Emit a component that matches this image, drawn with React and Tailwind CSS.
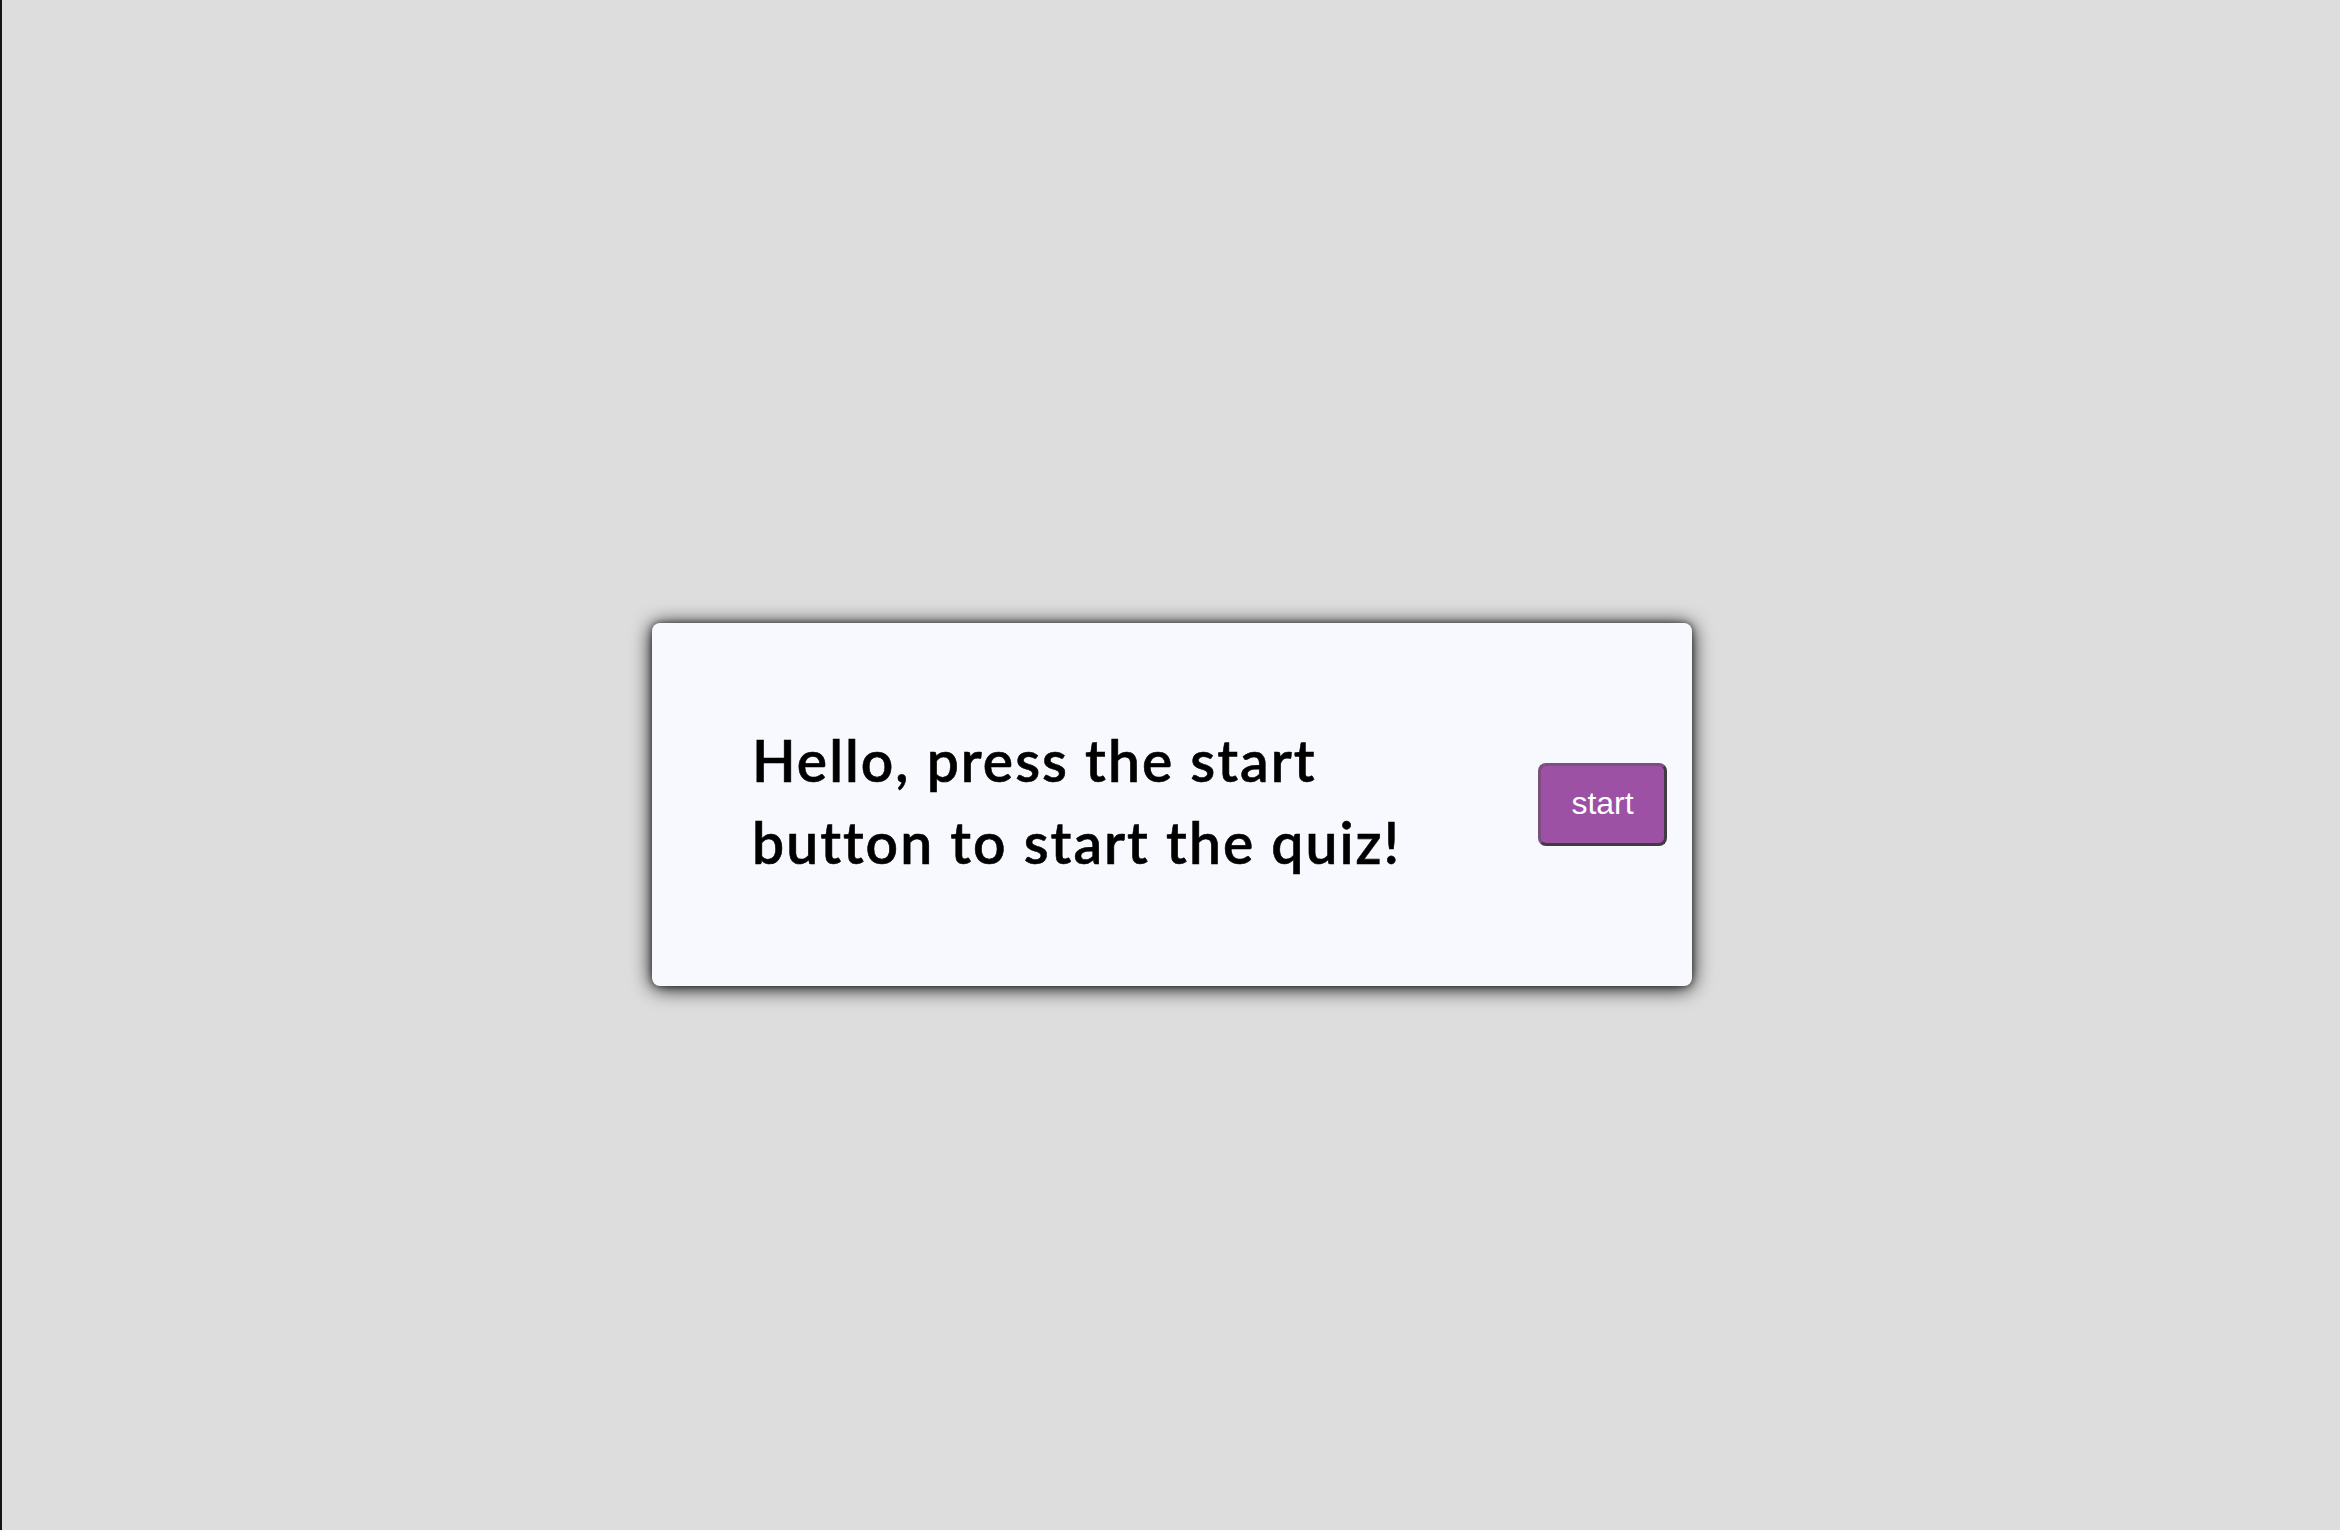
import React from 'react';

const App = () => {
  const startQuiz = () => {
    console.log('start quiz');
  };

  return (
    <div className="flex w-full h-screen bg-[#dddddd]">
      {/* thin window edge on the left */}
      <div className="w-[2px] h-full bg-[#111418]" />

      <div className="flex-1 flex items-center justify-center pt-[78px] pl-[2px]">
        <div className="w-[1040px] h-[363px] rounded-lg bg-[#f8f9fe] shadow-[0_2px_20px_rgba(0,0,0,1),0_0_6px_rgba(0,0,0,0.5)] flex items-center justify-between pl-[100px] pr-[25px]">
          <h1 className="font-['Lato',sans-serif] font-semibold text-[57px] leading-[82px] tracking-[2px] text-black pb-[6px] [-webkit-text-stroke:0.6px_black]">
            Hello, press the start
            <br />
            button to start the quiz!
          </h1>
          <button
            onClick={startQuiz}
            className="w-[129px] h-[83px] rounded-lg bg-[#9c51a4] border-[3px] border-t-[#7b4f7e] border-l-[#7b4f7e] border-b-[#403c42] border-r-[#403c42] text-white text-[32px] font-['Liberation_Sans',sans-serif] flex items-center justify-center pb-[2px]"
          >
            start
          </button>
        </div>
      </div>
    </div>
  );
};

export default App;
